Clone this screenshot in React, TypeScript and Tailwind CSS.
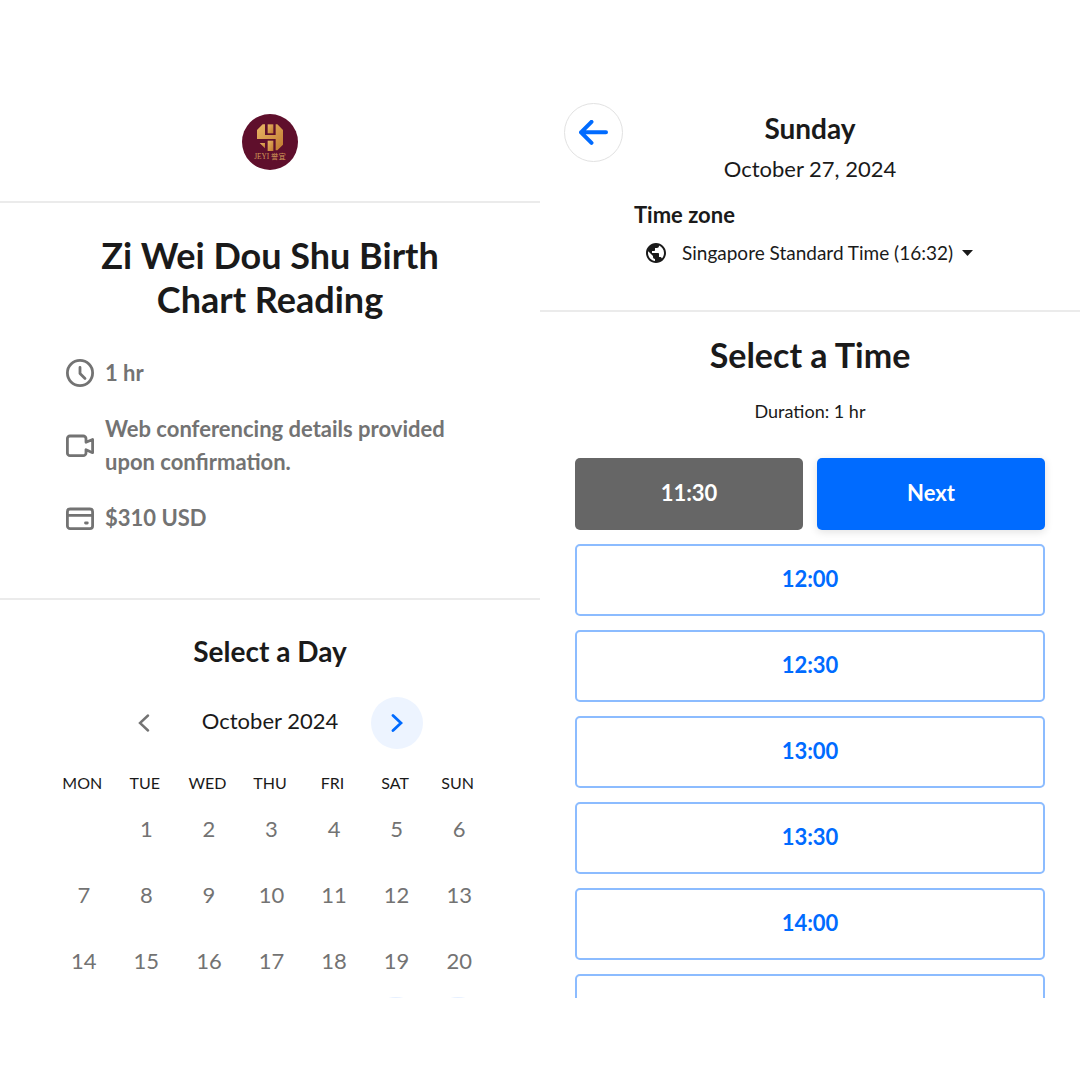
import { MdPublic } from "react-icons/md";

const weekdays = ["MON", "TUE", "WED", "THU", "FRI", "SAT", "SUN"];
const weeks: (number | null)[][] = [
  [null, 1, 2, 3, 4, 5, 6],
  [7, 8, 9, 10, 11, 12, 13],
  [14, 15, 16, 17, 18, 19, 20],
];
const times = ["12:00", "12:30", "13:00", "13:30", "14:00"];

function Logo() {
  return (
    <svg viewBox="0 0 168 168" className="size-14" role="img" aria-label="JEYI">
      <defs>
        <linearGradient id="gold" x1="0" y1="0" x2="1" y2="1">
          <stop offset="0" stopColor="#e9b565" />
          <stop offset="1" stopColor="#c07a30" />
        </linearGradient>
      </defs>
      <circle cx="84" cy="84" r="84" fill="#5f0f2c" />
      <g fill="url(#gold)">
        <path d="M45 48 L62 31 H69 V63 H101 V31 H106 L123 48 V92 L106 109 H101 V75 H45 Z" />
        <path d="M77 31 H94 V58 H77 Z" />
        <path d="M77 80 H94 V111 H77 Z" />
        <path d="M53 87 H69 V103 Z" />
      </g>
      <text x="84" y="135" textAnchor="middle" fontSize="22" fill="#d29a58" className="font-['Liberation_Serif','Noto_Sans_CJK_SC',serif]">
        JEYI 誉宜
      </text>
    </svg>
  );
}

function ClockIcon() {
  return (
    <svg viewBox="0 0 28 28" className="size-7 shrink-0" fill="none" stroke="currentColor" strokeWidth="2.8" strokeLinecap="round" strokeLinejoin="round" aria-hidden="true">
      <circle cx="14" cy="14" r="12.6" />
      <path d="M14 8.5V14.5L19 19.5" />
    </svg>
  );
}

function VideoIcon() {
  return (
    <svg viewBox="0 0 28 28" className="size-7 shrink-0" fill="none" stroke="currentColor" strokeWidth="2.8" strokeLinecap="round" strokeLinejoin="round" aria-hidden="true">
      <path d="M4 5H17.2A2.8 2.8 0 0 1 20 7.8V11.3L26.6 8.5V21.7L20 18.7V21.9A2.8 2.8 0 0 1 17.2 24.7H4A2.6 2.6 0 0 1 1.4 22V7.7A2.6 2.6 0 0 1 4 5Z" />
    </svg>
  );
}

function CardIcon() {
  return (
    <svg viewBox="0 0 28 28" className="size-7 shrink-0" fill="none" stroke="currentColor" strokeWidth="2.8" strokeLinecap="round" strokeLinejoin="round" aria-hidden="true">
      <rect x="1.4" y="5" width="25.2" height="19.6" rx="2.7" />
      <path d="M1.4 11.4H26.6" />
      <path d="M19.5 19H21.3" />
    </svg>
  );
}

export default function App() {
  return (
    <main className="h-screen bg-white py-[82px] font-[Lato,sans-serif] text-[#1a1a1a]">
      <div className="grid h-full grid-cols-2 overflow-hidden">
        <section>
          <header className="flex justify-center border-b-2 border-[#ebebeb] pt-8 pb-[31px]">
            <Logo />
          </header>

          <div className="border-b-2 border-[#ebebeb] px-16 pt-[30px] pb-16">
            <h1 className="mx-auto max-w-90 text-center text-4xl leading-[44px] font-bold">
              Zi Wei Dou Shu Birth Chart Reading
            </h1>
            <ul className="mt-[35px] flex flex-col gap-[23px] pl-0.5 text-[22px] leading-[33px] font-bold text-[#737373]">
              <li className="flex items-center gap-[11px]">
                <ClockIcon />
                1 hr
              </li>
              <li className="flex items-center gap-[11px]">
                <VideoIcon />
                <span className="max-w-90">Web conferencing details provided upon confirmation.</span>
              </li>
              <li className="flex items-center gap-[11px]">
                <CardIcon />
                $310 USD
              </li>
            </ul>
          </div>

          <div className="pt-[33px]">
            <h2 className="text-center text-[28px] leading-9 font-bold">Select a Day</h2>
            <div className="mt-7 flex items-center justify-center">
              <button aria-label="Previous month" className="grid size-[52px] place-items-center text-[#737373]">
                <svg viewBox="0 0 12 18" className="h-[18px] w-3" fill="none" stroke="currentColor" strokeWidth="2.4" strokeLinecap="round" aria-hidden="true">
                  <path d="M10 1.5L2 9L10 16.5" />
                </svg>
              </button>
              <div className="w-[201px] pb-1 text-center text-[22px] leading-8">October 2024</div>
              <button aria-label="Next month" className="grid size-[52px] place-items-center rounded-full bg-[#edf4ff] text-[#006bff]">
                <svg viewBox="0 0 12 18" className="h-[18px] w-3" fill="none" stroke="currentColor" strokeWidth="2.8" strokeLinecap="round" aria-hidden="true">
                  <path d="M2 1.5L10 9L2 16.5" />
                </svg>
              </button>
            </div>
            <table className="mx-auto mt-[22px] w-[438px] table-fixed text-center">
              <thead>
                <tr>
                  {weekdays.map((day) => (
                    <th key={day} scope="col" className="h-6 p-0 text-base leading-6 font-normal">
                      {day}
                    </th>
                  ))}
                </tr>
              </thead>
              <tbody className="text-[22px] text-[#737373]">
                {weeks.map((week, row) => (
                  <tr key={row}>
                    {week.map((day, col) => (
                      <td key={col} className="h-[66px] p-0 pl-[3px]">
                        {day !== null && <button className="size-[58px] rounded-full">{day}</button>}
                      </td>
                    ))}
                  </tr>
                ))}
                <tr>
                  <td colSpan={5} className="h-[66px] p-0" />
                  <td className="p-0 pl-[3px]">
                    <button aria-label="26" className="block size-[58px] rounded-full bg-[#e6f0ff]" />
                  </td>
                  <td className="p-0 pl-[3px]">
                    <button aria-label="27" className="block size-[58px] rounded-full bg-[#e6f0ff]" />
                  </td>
                </tr>
              </tbody>
            </table>
          </div>
        </section>

        <section>
          <header className="relative border-b-2 border-[#ebebeb] px-6 pt-7 pb-[43px]">
            <button aria-label="Back" className="absolute top-[21px] left-6 grid size-[59px] place-items-center rounded-full border border-[#e2e2e2] text-[#006bff]">
              <svg viewBox="0 0 30 26" className="h-[26px] w-[30px]" fill="none" stroke="currentColor" strokeWidth="4" strokeLinecap="round" strokeLinejoin="round" aria-hidden="true">
                <path d="M12.5 1.8L2 12.3L12.5 22.8M2 12.3H27" />
              </svg>
            </button>
            <h2 className="text-center text-[28px] leading-9 font-bold">Sunday</h2>
            <p className="mt-[5px] text-center text-[22px] leading-9">October 27, 2024</p>
            <div className="mx-auto mt-3 w-[352px]">
              <label htmlFor="zone" className="block text-[22px] leading-8 font-bold">
                Time zone
              </label>
              <div className="mt-2 flex items-center pl-2.5">
                <MdPublic className="size-6 shrink-0" aria-hidden="true" />
                <select id="zone" className="ml-3.5 appearance-none bg-transparent text-[19px] leading-7">
                  <option>Singapore Standard Time (16:32)</option>
                </select>
                <svg viewBox="0 0 11 6" className="ml-2 h-1.5 w-[11px] shrink-0" fill="currentColor" aria-hidden="true">
                  <path d="M0 0H11L5.5 6Z" />
                </svg>
              </div>
            </div>
          </header>

          <div className="px-[35px] pt-[19px]">
            <h2 className="text-center text-[34px] leading-12 font-bold">Select a Time</h2>
            <p className="mt-4 text-center text-lg leading-8">Duration: 1 hr</p>
            <div className="mt-[31px] grid grid-cols-2 gap-3.5 text-[22px] font-bold">
              <button className="h-[72px] rounded-[5px] bg-[#666666] pb-1 text-white">11:30</button>
              <button className="h-[72px] rounded-[5px] bg-[#006bff] pb-1 text-white shadow-[0_2px_8px_rgba(0,0,0,0.12)]">Next</button>
              {times.map((time) => (
                <button key={time} className="col-span-2 h-[72px] rounded-[5px] border-2 border-[#8cbcff] pb-1 text-[#006bff]">
                  {time}
                </button>
              ))}
              <button aria-label="14:30" className="col-span-2 h-[72px] rounded-[5px] border-2 border-[#8cbcff]" />
            </div>
          </div>
        </section>
      </div>
    </main>
  );
}
